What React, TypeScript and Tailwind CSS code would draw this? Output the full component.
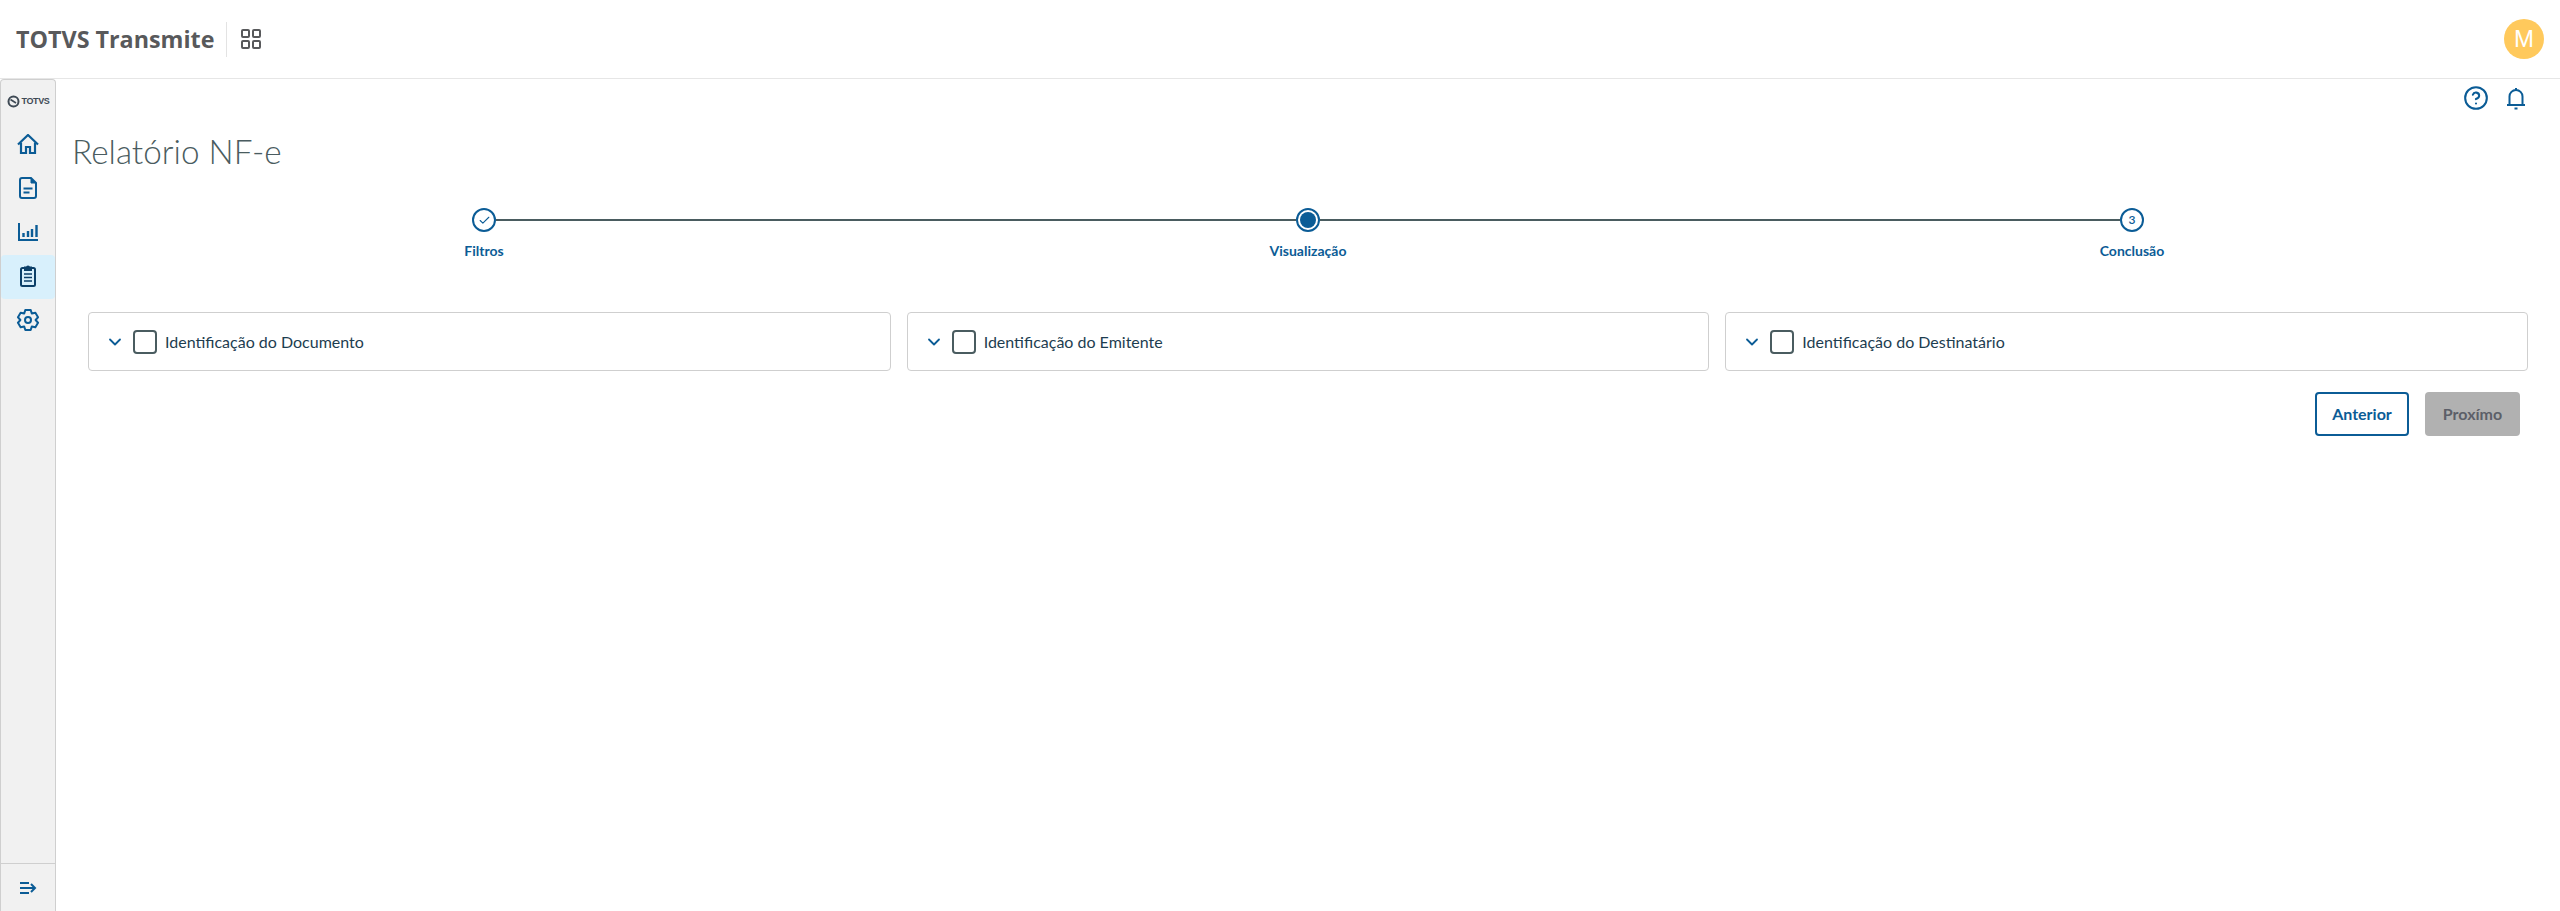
import { ChevronDown, CircleHelp, LayoutGrid, Check } from "lucide-react"

const blue = "text-[#0b5c96]"

function HomeIcon() {
  return (
    <svg width="22" height="22" viewBox="0 1 22 22" fill="none" stroke="currentColor" strokeWidth="2.200">
      <path d="M1 11.500 11 2l10 9.500" />
      <path d="M4 9.500V20h5v-6h4v6h5V9.500" />
    </svg>
  )
}

function DocIcon() {
  return (
    <svg width="20" height="24" viewBox="0 1 20 24" fill="none" stroke="currentColor" strokeWidth="2">
      <path d="M4 2h9l5 5v13a2 2 0 0 1-2 2H4a2 2 0 0 1-2-2V4a2 2 0 0 1 2-2z" />
      <path d="M13 2v5h5z" fill="currentColor" strokeWidth="1" />
      <path d="M5.500 12.500h9M5.500 16.500h6" />
    </svg>
  )
}

function ChartIcon() {
  return (
    <svg width="22" height="20" viewBox="0 1 22 20" fill="none" stroke="currentColor" strokeWidth="2">
      <path d="M2 1v17h19" />
      <path d="M7 11v4M11.500 9v6M15.500 7v8M20 3v12" strokeWidth="2.400" transform="translate(-0.500 0)" />
    </svg>
  )
}

function ClipboardIcon() {
  return (
    <svg width="18" height="24" viewBox="0 1 18 24" fill="none" stroke="#0b3f68" strokeWidth="2">
      <rect x="2" y="4" width="14" height="18" rx="1.500" />
      <path d="M6 6V3.500h2a1 1 0 0 1 2 0h2V6z" fill="#0b3f68" />
      <path d="M5 10h8M5 13.500h8M5 17h8" strokeWidth="1.600" />
    </svg>
  )
}

// six lobes, point up
const gearPath = Array.from({ length: 6 }, (_, i) => {
  const a = ((i * 60 - 90) * Math.PI) / 180
  const pt = (r: number, off: number) =>
    `${(12 + r * Math.cos(a + off)).toFixed(2)} ${(12 + r * Math.sin(a + off)).toFixed(2)}`
  return `${i === 0 ? "M" : "L"}${pt(7.6, -0.52)} L${pt(10.4, -0.26)} L${pt(10.4, 0.26)} L${pt(7.6, 0.52)}`
}).join(" ") + "z"

function GearIcon() {
  return (
    <svg width="24" height="24" viewBox="0 1 24 24" fill="none" stroke="currentColor" strokeWidth="2" strokeLinejoin="round">
      <path d={gearPath} />
      <circle cx="12" cy="12" r="3" />
    </svg>
  )
}

function BellIcon() {
  return (
    <svg width="24" height="24" viewBox="0 0 24 24" fill="none" stroke="currentColor" strokeWidth="2">
      <path d="M5.500 19v-8.500a6.500 6.500 0 0 1 13 0V19" />
      <path d="M3 19h18" />
      <path d="M12 2v2.500M10.500 22.500h3" />
    </svg>
  )
}

function CollapseIcon() {
  return (
    <svg width="18" height="14" viewBox="0 0 18 14" fill="none" stroke="currentColor" strokeWidth="2">
      <path d="M1 2h9M1 7h14M1 12h9" />
      <path d="M12 3l4 4-4 4" />
    </svg>
  )
}

function Sidebar() {
  const items = [
    { id: "home", icon: <HomeIcon /> },
    { id: "doc", icon: <DocIcon /> },
    { id: "chart", icon: <ChartIcon /> },
    { id: "report", icon: <ClipboardIcon />, active: true },
    { id: "settings", icon: <GearIcon /> },
  ]
  return (
    <aside className="w-[56px] shrink-0 flex flex-col bg-[#f1f1f1] border-x border-t border-[#cfcfcf] rounded-t-[4px]">
      <div className="h-[43px] flex items-center justify-center gap-[2px] text-[#3f4a55]">
        <svg width="13" height="13" viewBox="0 0 13 13" fill="none" stroke="currentColor">
          <circle cx="6.500" cy="6.500" r="5" strokeWidth="2" />
          <path d="M3.500 4.500 9 8" strokeWidth="1.600" />
        </svg>
        <span className="font-['Liberation_Sans',sans-serif] text-[9px] font-bold tracking-[-0.4px]">TOTVS</span>
      </div>
      <nav className={`flex flex-col ${blue}`}>
        {items.map((item) => (
          <div
            key={item.id}
            className={`h-[44px] flex items-center justify-center rounded-[4px] ${item.active ? "bg-[#d8f0fc]" : ""}`}
          >
            {item.icon}
          </div>
        ))}
      </nav>
      <div className={`mt-auto h-[48px] border-t border-[#cfcfcf] flex items-center justify-center ${blue}`}>
        <CollapseIcon />
      </div>
    </aside>
  )
}

function StepCircle({ children }: { children: React.ReactNode }) {
  return (
    <div className="w-[24px] h-[24px] shrink-0 rounded-full border-2 border-[#0b5c96] flex items-center justify-center text-[#0b5c96] text-[12px] font-semibold">
      {children}
    </div>
  )
}

const cards = ["Identificação do Documento", "Identificação do Emitente", "Identificação do Destinatário"]

export default function App() {
  return (
    <div className="h-[911px] flex flex-col bg-white font-['Lato','Noto_Sans',sans-serif] overflow-hidden">
      <header className="h-[79px] shrink-0 border-b border-[#e6e6e6] flex items-center pl-[16px] pr-[16px]">
        <span className="font-['Open_Sans',sans-serif] font-bold text-[23.300px] text-[#58595b]">TOTVS Transmite</span>
        <div className="ml-[12px] w-px h-[35px] bg-[#e3e3e3]" />
        <LayoutGrid size={24} strokeWidth={2} className="ml-[12px] text-[#58595b]" />
        <div className="ml-auto w-[40px] h-[40px] rounded-full bg-[#ffc95c] flex items-center justify-center text-white text-[24px] font-['Liberation_Sans',sans-serif]">
          M
        </div>
      </header>

      <div className="flex-1 flex min-h-0">
        <Sidebar />

        <main className="flex-1 min-w-0 flex flex-col">
          <div className={`h-[38px] flex items-center justify-end gap-[15px] pr-[32px] ${blue}`}>
            <CircleHelp size={26} strokeWidth={1.900} />
            <BellIcon />
          </div>

          <h1 className="ml-[16px] mt-[12px] text-[33.300px] leading-[44px] font-light text-[#4a5c60]">Relatório NF-e</h1>

          <div className="mt-[35px] mx-[16px]">
            <div className="mx-[400px] flex items-center">
              <StepCircle>
                <Check size={13} strokeWidth={2} />
              </StepCircle>
              <div className="flex-1 h-[2px] bg-[#4a5c60]" />
              <StepCircle>
                <div className="w-[16px] h-[16px] rounded-full bg-[#0b5c96]" />
              </StepCircle>
              <div className="flex-1 h-[2px] bg-[#4a5c60]" />
              <StepCircle>3</StepCircle>
            </div>
            <div className={`mt-[9px] grid grid-cols-3 text-center text-[14px] leading-[20px] font-bold ${blue}`}>
              <span>Filtros</span>
              <span>Visualização</span>
              <span>Conclusão</span>
            </div>
          </div>

          <div className="mt-[51px] ml-[32px] mr-[32px] grid grid-cols-3 gap-[16px]">
            {cards.map((title) => (
              <div
                key={title}
                className="h-[59px] bg-white border border-[#cfcfcf] rounded-[4px] flex items-center pl-[16px]"
              >
                <ChevronDown size={20} strokeWidth={2.200} className={blue} />
                <div className="ml-[8px] w-[24px] h-[24px] border-2 border-[#4a5c60] rounded-[4px]" />
                <span className="ml-[8px] text-[16px] leading-[22px] text-[#1d3d50]">{title}</span>
              </div>
            ))}
          </div>

          <div className="mt-[21px] mr-[40px] flex justify-end gap-[16px]">
            <button className="w-[94px] h-[44px] rounded-[4px] border-2 border-[#0b5c96] bg-white text-[#0b5c96] text-[16px] font-bold">
              Anterior
            </button>
            <button className="w-[95px] h-[44px] rounded-[4px] bg-[#b1b1b1] text-[#5c5f68] text-[16px] font-bold">
              Proxímo
            </button>
          </div>
        </main>
      </div>
    </div>
  )
}
